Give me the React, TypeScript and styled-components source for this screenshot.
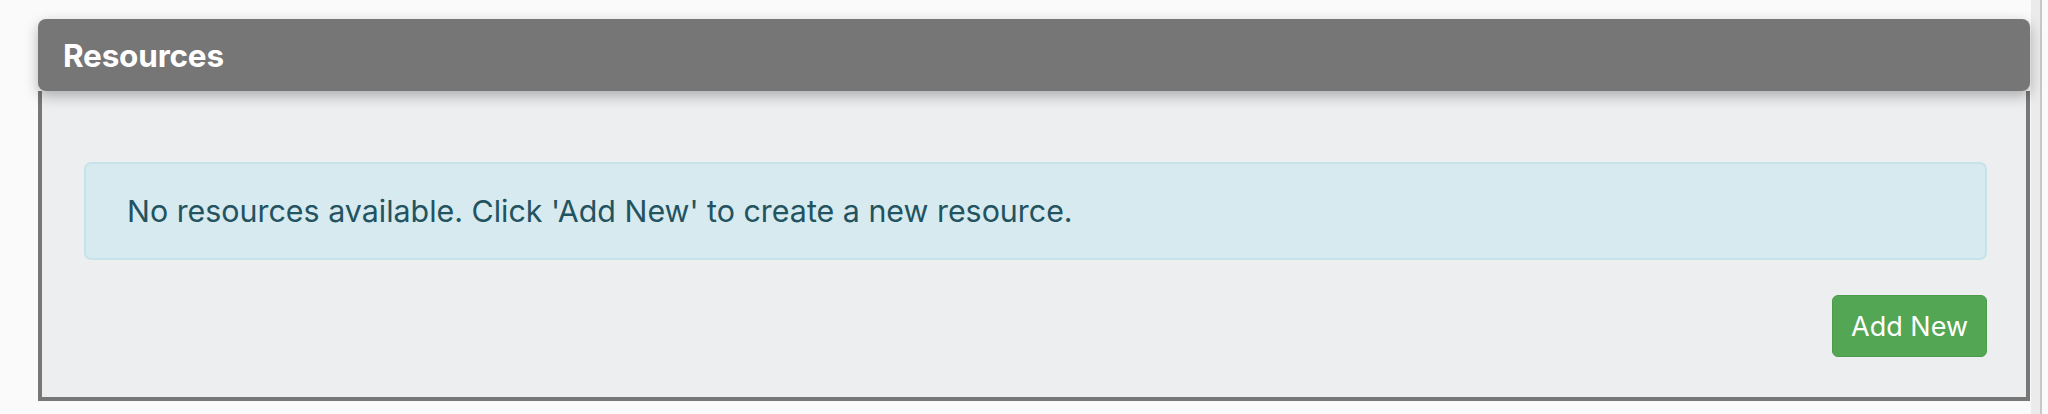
import React from 'react';
import styled, { createGlobalStyle } from 'styled-components';

const GlobalStyle = createGlobalStyle`
  html, body {
    margin: 0;
    padding: 0;
    background: #fafafa;
    font-family: Inter, "Liberation Sans", Arial, sans-serif;
  }
`;

const Page = styled.div`
  display: flex;
  width: 2048px;
  height: 414px;
  background: #fafafa;
  overflow: hidden;
`;

const Main = styled.div`
  flex: 1;
  padding: 19px 1px 0 38px;
`;

const Rail = styled.div`
  width: 9px;
  margin-right: 6px;
  background: #ebebeb;
  border-right: 2px solid #c5c8cc;
`;

const Panel = styled.section`
  display: flex;
  flex-direction: column;
`;

const PanelHeader = styled.div`
  position: relative;
  z-index: 1;
  height: 72px;
  display: flex;
  align-items: center;
  padding: 0 25px;
  background: #767676;
  border-radius: 8px;
  box-shadow: 0 5px 14px rgba(0, 0, 0, 0.28);
`;

const PanelTitle = styled.h2`
  margin: 0;
  color: #ffffff;
  font-size: 31.5px;
  font-weight: 700;
  letter-spacing: -0.2px;
`;

const PanelBody = styled.div`
  display: flex;
  flex-direction: column;
  align-items: flex-end;
  gap: 35px;
  padding: 71px 39px 40px 42px;
  background: #edeef0;
  border: 4px solid #777777;
  border-top: none;
`;

const Alert = styled.div`
  align-self: stretch;
  height: 98px;
  box-sizing: border-box;
  display: flex;
  align-items: center;
  padding: 0 41px;
  background: #d6eaf0;
  border: 2px solid #c6e3ea;
  border-radius: 7px;
  color: #23535f;
  font-size: 30.4px;
`;

const Button = styled.button`
  height: 62px;
  padding: 0 18px;
  background: #53a653;
  border: 1px solid #4b9b4b;
  border-radius: 6px;
  color: #ffffff;
  font-family: inherit;
  font-size: 27px;
  cursor: pointer;
`;

const App: React.FC = () => {
  return (
    <Page>
      <GlobalStyle />
      <Main>
        <Panel>
          <PanelHeader>
            <PanelTitle>Resources</PanelTitle>
          </PanelHeader>
          <PanelBody>
            <Alert>No resources available. Click 'Add New' to create a new resource.</Alert>
            <Button>Add New</Button>
          </PanelBody>
        </Panel>
      </Main>
      <Rail />
    </Page>
  );
};

export default App;
